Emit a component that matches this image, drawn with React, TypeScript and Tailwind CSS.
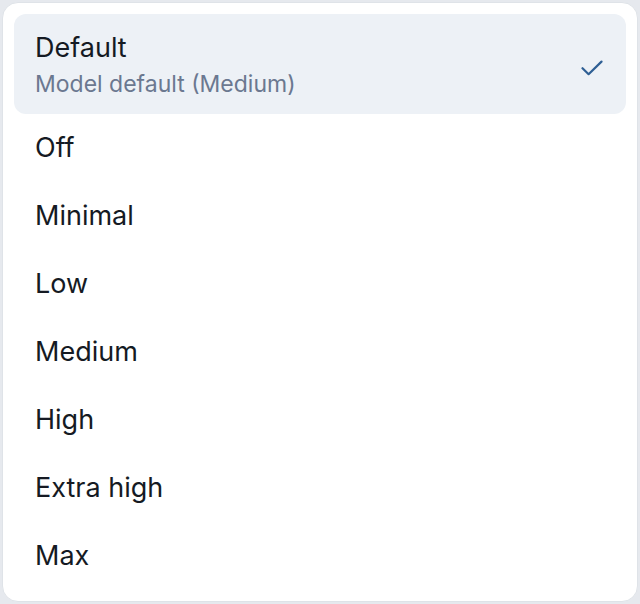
import React from "react";

const items = ["Off", "Minimal", "Low", "Medium", "High", "Extra high", "Max"];

export default function App() {
  return (
    <div className="w-[640px] h-[604px] bg-[#e6e9ee] p-[2px]" style={{ fontFamily: "Inter, 'Noto Sans', sans-serif" }}>
      <div className="h-full bg-white rounded-[16px] border border-[#dfe3e8] p-[11px] flex flex-col">
        <div className="h-[100px] rounded-[12px] bg-[#edf1f6] flex items-start justify-between pl-[21px] pr-[23px] pt-[17px]">
          <div className="flex flex-col">
            <span className="text-[27px] leading-[34px] text-[#151a23]">Default</span>
            <span className="text-[23px] leading-[30px] mt-[4px] text-[#6b7890]">Model default (Medium)</span>
          </div>
          <svg className="mt-[29px]" width="22" height="16" viewBox="0 0 22 16" fill="none" stroke="#2f5f94" strokeWidth="2.2" strokeLinecap="round" strokeLinejoin="round">
            <path d="M1.5 8.2L7.6 14.2L20.5 1.6" />
          </svg>
        </div>
        {items.map((t) => (
          <div key={t} className="h-[68px] flex items-center pl-[21px] text-[27px] text-[#151a23]">
            {t}
          </div>
        ))}
      </div>
    </div>
  );
}
